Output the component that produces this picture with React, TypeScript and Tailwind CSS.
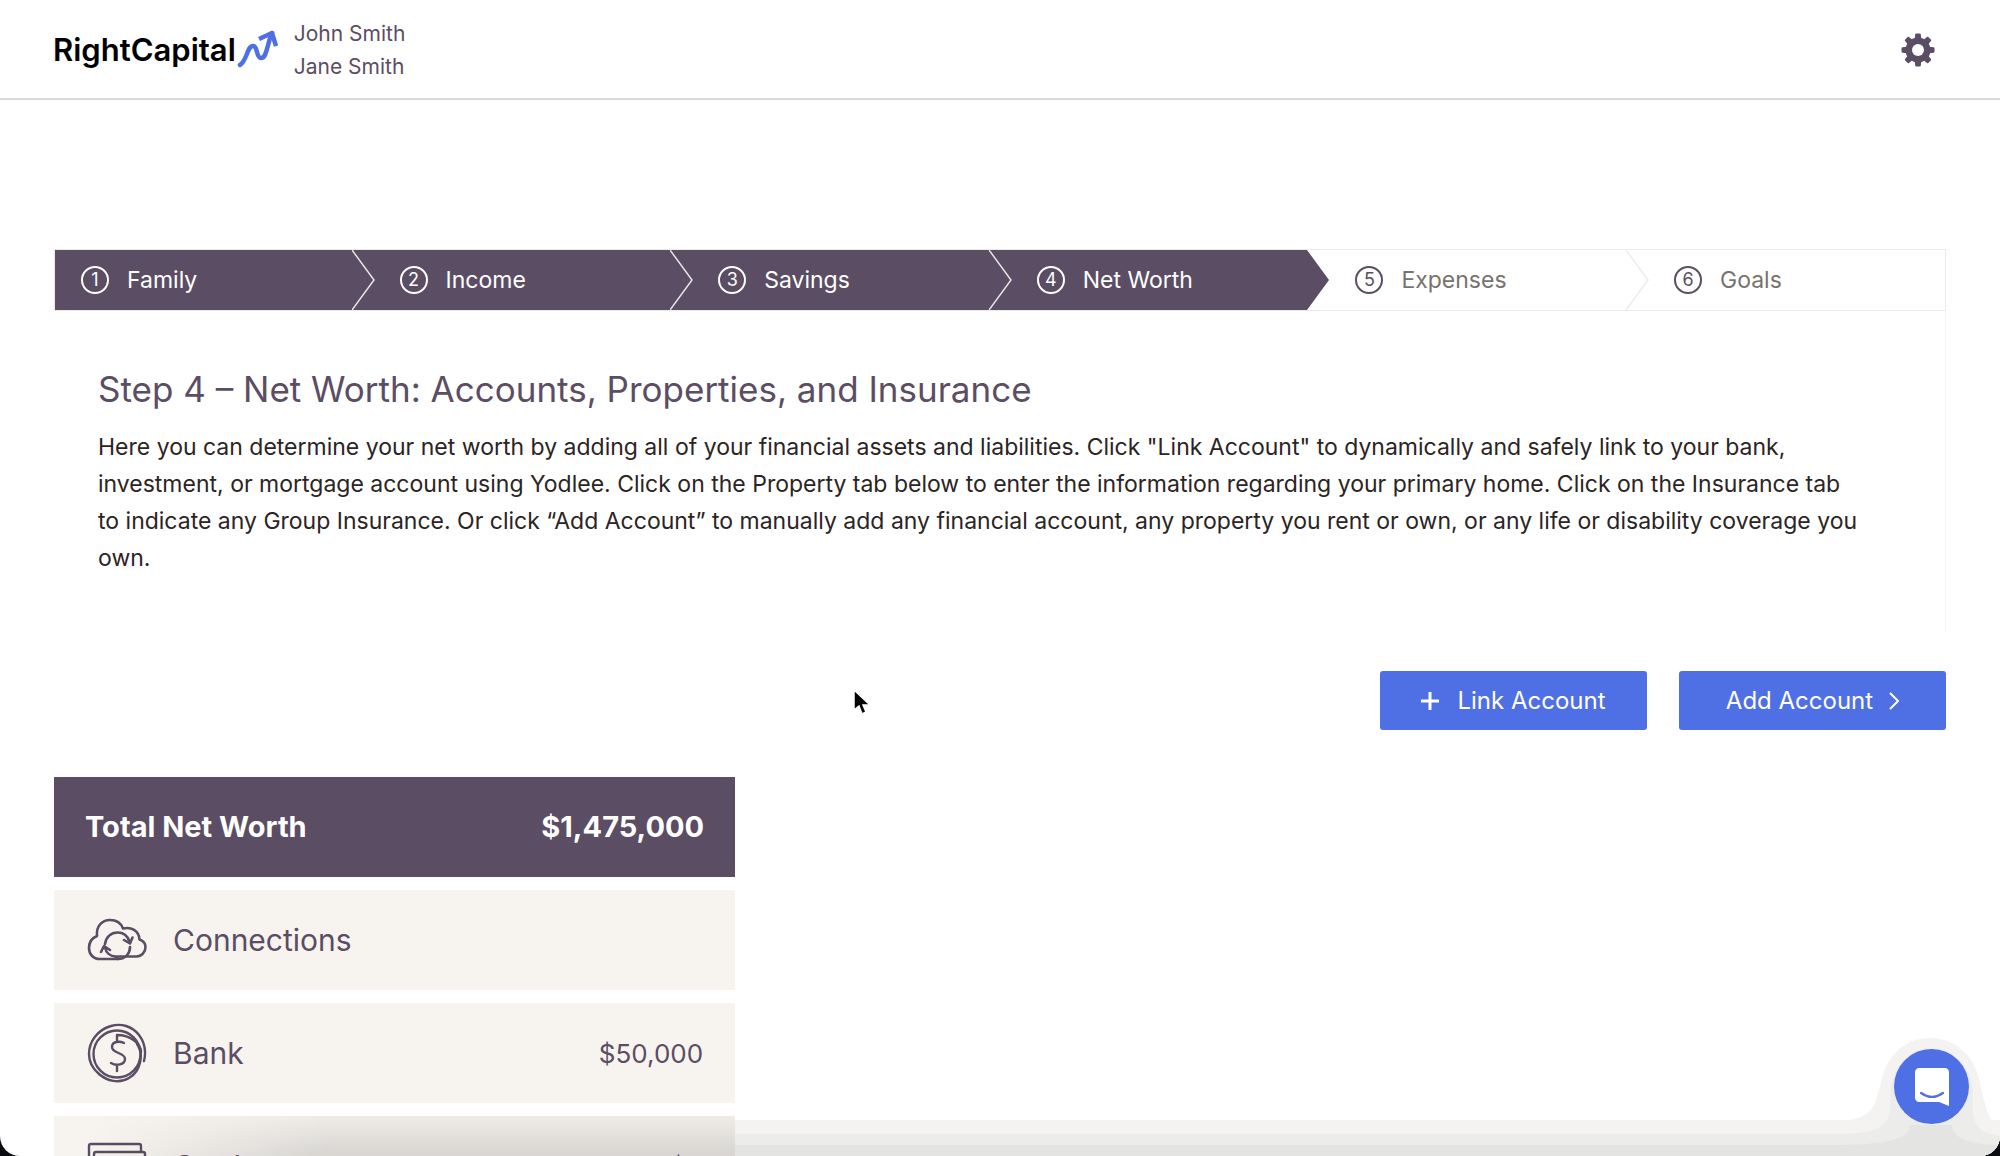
const STEPS = ['Family', 'Income', 'Savings', 'Net Worth', 'Expenses', 'Goals']
const CURRENT_STEP = 4

const ACCOUNTS = [
  { name: 'Connections', amount: '', icon: <CloudSyncIcon /> },
  { name: 'Bank', amount: '$50,000', icon: <CoinIcon /> },
  { name: 'Cards', amount: '$0', icon: <CardsIcon /> },
]

function CloudSyncIcon() {
  return (
    <svg width="60" height="60" viewBox="0 0 60 60" fill="none" stroke="#5b4d63" strokeWidth="2.6" strokeLinecap="round" strokeLinejoin="round">
      <path d="M31 49H13C6 49 2 44 2 38c0-6 3-10 8-12C9 16 15 10 23 10c6 0 11 3 13 8.500 8-2 16 2 16.500 11 4 1.500 6 4 6 7.500 0 5-4 9.500-9 9.500H29c-6 0-10-4-11-9" />
      <path d="M18 34c1-7 6-11.500 12.500-11.500 6 0 10 3 12 9" />
      <path d="M37 30l6 3.500 2.500-6M14 42l3-6 6 4" />
      <path d="M43 37c0 6-4 12-12 12" />
    </svg>
  )
}

function CoinIcon() {
  return (
    <svg width="60" height="60" viewBox="0 0 60 60" fill="none" stroke="#5b4d63" strokeWidth="2.4" strokeLinecap="round" strokeLinejoin="round">
      <path d="M57 38C59 30 58 20 52 12 45 3 34 0 24 3 10 7 2 19 2 31c0 8 4 15 10 20 8 7 20 10 30 4 12-7 15-24 8-34" />
      <circle cx="30" cy="31" r="23.500" />
      <path d="M54 29c0-8-10-17-24-17v7M30 42v6M37 20c-4-2-12-2-12 4 0 7 13 5 13 12 0 6-9 7-14 4" />
    </svg>
  )
}

function CardsIcon() {
  return (
    <svg width="60" height="60" viewBox="0 0 60 60" fill="none" stroke="#5b4d63" strokeWidth="2.4" strokeLinejoin="round">
      <path d="M8 42H4c-1 0-2-1-2-2V10c0-1 1-2 2-2h48c1 0 2 1 2 2v6" />
      <rect x="7" y="16" width="51" height="36" rx="2" />
    </svg>
  )
}

function GearIcon() {
  return (
    <svg width="34" height="34" viewBox="0 0 34 34" fill="#5b4d63">
      <circle cx="17" cy="17" r="12.500" />
      <path id="tooth" d="M13.500 8l.7-6.500c.1-.7.500-1 1.200-1h3.200c.7 0 1.100.3 1.200 1l.7 6.500z" />
      <use href="#tooth" transform="rotate(45 17 17)" />
      <use href="#tooth" transform="rotate(90 17 17)" />
      <use href="#tooth" transform="rotate(135 17 17)" />
      <use href="#tooth" transform="rotate(180 17 17)" />
      <use href="#tooth" transform="rotate(225 17 17)" />
      <use href="#tooth" transform="rotate(270 17 17)" />
      <use href="#tooth" transform="rotate(315 17 17)" />
      <circle cx="17" cy="17" r="6" fill="#fff" />
    </svg>
  )
}

function Header() {
  return (
    <header className="flex h-[100px] items-center border-b-2 border-[#dcd8d4] pl-[53px] pr-[65px] pt-[2px]">
      <a href="#" className="flex items-center text-[31px] font-semibold leading-10 text-black">
        RightCapital
        <svg width="42" height="40" viewBox="0 0 42 40" fill="none" stroke="#4f6fe5" strokeWidth="4.5" strokeLinejoin="round">
          <path strokeLinecap="round" d="M4 35c7-4 7-19 13-19 5 0 3 12 8 12C31 28 31 14 36 3" />
          <path d="M23 9l13-6 4 13" />
        </svg>
      </a>
      <div className="ml-4 text-[21px] leading-[33px] text-[#5b4d63]">
        <p>John Smith</p>
        <p>Jane Smith</p>
      </div>
      <button aria-label="Settings" className="ml-auto">
        <GearIcon />
      </button>
    </header>
  )
}

function Step({ label, number }: { label: string; number: number }) {
  const done = number <= CURRENT_STEP
  const last = number === STEPS.length
  return (
    <li
      className={`relative flex items-center pl-[26px] ${last ? 'w-[297px]' : 'flex-1'} ${done ? 'bg-[#5b4d63] text-white' : 'text-[#77736f]'}`}
    >
      <span className={`flex size-7 items-center justify-center rounded-full border-2 text-lg ${done ? 'border-white' : 'border-[#5b4d63] text-[#5b4d63]'}`}>
        {number}
      </span>
      <span className="ml-[18px] text-[23px]">{label}</span>
      {!last && (
        <svg className="absolute -right-0.5 top-0 z-10" width="24" height="60" viewBox="0 0 24 60" fill="none">
          {number === CURRENT_STEP ? (
            <path d="M0 0h24v60H0l22-30z" fill="#fff" />
          ) : (
            <path d="M0 0l22 30L0 60" stroke={done ? '#e9e4e4' : '#efebe8'} strokeWidth="1.500" />
          )}
        </svg>
      )}
    </li>
  )
}

function ChatLauncher() {
  return (
    <div className="absolute bottom-0 right-0 z-20">
      <svg width="170" height="120" viewBox="0 0 170 120" className="block">
        <path d="M0 85C40 85 44 75 50 50 56 18 76 2 100 2s44 16 50 44c5 26 10 40 20 50v24H0z" fill="#f4f3f2" />
        <path d="M0 98c48 0 62-6 60-34C60 30 80 12 101 12s42 18 42 48c-2 30 5 36 27 40v20H0z" fill="#ececeb" />
        <path d="M0 109c50 0 80-4 80-20h42c0 14 20 20 48 20v11H0z" fill="#e4e4e3" />
      </svg>
      <button aria-label="Open chat" className="absolute bottom-8 right-[31px] flex size-[75px] items-center justify-center rounded-full bg-[#4f6fe5]">
        <svg width="34" height="38" viewBox="0 0 34 38" fill="#fff">
          <path d="M4 0h26c2 0 4 2 4 4v34l-10-4H4c-2 0-4-2-4-4V4c0-2 2-4 4-4z" />
          <path d="M6 25c7 5 15 5 22 0" fill="none" stroke="#4f6fe5" strokeWidth="2.2" strokeLinecap="round" />
        </svg>
      </button>
    </div>
  )
}

export default function App() {
  return (
    <div className="h-screen bg-[#0b0b12]">
      <div className="relative h-full overflow-hidden rounded-b-[20px] bg-white font-[Inter,sans-serif]">
        <Header />
        <main className="px-[54px] pt-[149px]">
          <ol className="flex h-[62px] border border-[#efe8e5]">
            {STEPS.map((label, i) => (
              <Step key={label} label={label} number={i + 1} />
            ))}
          </ol>

          <section className="h-[322px] border-r border-[#f8f5f3] px-11 pt-[54px]">
            <h1 className="text-[35px] leading-[48px] text-[#5b4d63]">Step 4 – Net Worth: Accounts, Properties, and Insurance</h1>
            <p className="mt-4 text-[23px] leading-[37px] text-[#2b2424]">
              Here you can determine your net worth by adding all of your financial assets and liabilities. Click "Link Account" to
              dynamically and safely link to your bank, investment, or mortgage account using Yodlee. Click on the Property tab below
              to enter the information regarding your primary home. Click on the Insurance tab
              <br />
              to indicate any Group Insurance. Or click “Add Account” to manually add any financial account, any property you rent or
              own, or any life or disability coverage you own.
            </p>
          </section>

          <div className="mt-[38px] flex justify-end gap-8 text-2xl text-white">
            <button className="flex h-[59px] w-[267px] items-center justify-center gap-[18px] rounded-[3px] bg-[#4f6fe5]">
              <svg width="18" height="18" viewBox="0 0 18 18" stroke="#fff" strokeWidth="3">
                <path d="M9 0v18M0 9h18" />
              </svg>
              Link Account
            </button>
            <button className="flex h-[59px] w-[267px] items-center justify-center gap-4 rounded-[3px] bg-[#4f6fe5]">
              Add Account
              <svg width="10" height="18" viewBox="0 0 10 18" fill="none" stroke="#fff" strokeWidth="2">
                <path d="M1 1l8 8-8 8" />
              </svg>
            </button>
          </div>

          <div className="mt-[47px] flex w-[36%] flex-col gap-[13px] text-[#5b4d63]">
            <div className="relative z-10 flex h-[100px] items-center justify-between bg-[#5b4d63] px-[31px] text-[29px] font-bold text-white">
              <h2>Total Net Worth</h2>
              <span>$1,475,000</span>
            </div>
            {ACCOUNTS.map((account) => (
              <button key={account.name} className="relative z-10 flex h-[100px] items-center bg-[#f7f4f0] pl-[33px] pr-8 text-left text-[30px]">
                {account.icon}
                <span className="ml-[26px]">{account.name}</span>
                <span className="ml-auto text-[26px]">{account.amount}</span>
                {account.name === 'Cards' && (
                  <span className="absolute inset-x-0 top-0 h-10 bg-linear-to-b from-black/3 to-black/13 mask-l-from-60% mask-l-to-95%" />
                )}
              </button>
            ))}
          </div>
        </main>

        <div className="absolute bottom-0 left-[10%] right-0 h-9 bg-[linear-gradient(#f4f3f2_0_14px,#ececeb_14px_25px,#e4e4e3_25px)]" />
        <ChatLauncher />

        <svg className="absolute left-[852px] top-[688px]" width="20" height="30" viewBox="0 0 20 30">
          <path d="M2 2v20l5-4 3 8 4-2-3-7h7z" fill="#000" stroke="#fff" strokeWidth="1.5" />
        </svg>
      </div>
    </div>
  )
}
